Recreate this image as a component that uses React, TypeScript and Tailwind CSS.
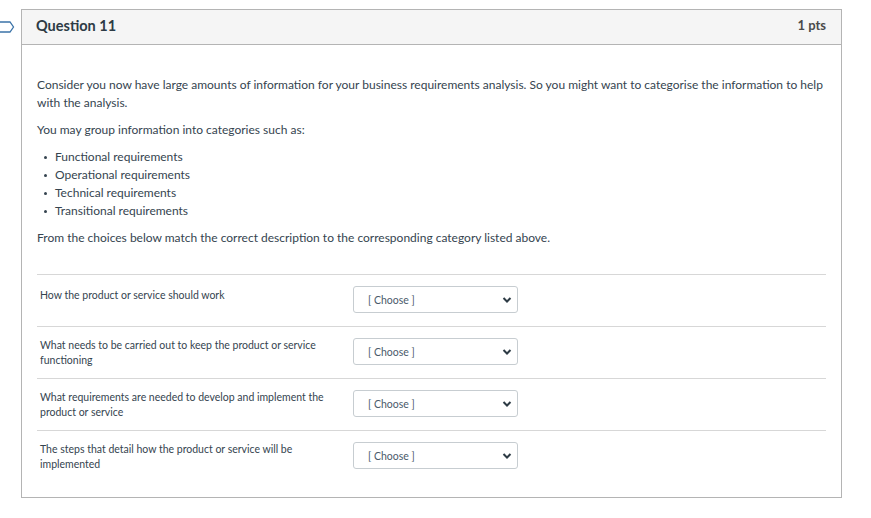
import React from 'react';

const rows = [
  { label: 'How the product or service should work', lift: true },
  { label: 'What needs to be carried out to keep the product or service functioning' },
  { label: 'What requirements are needed to develop and implement the product or service' },
  { label: 'The steps that detail how the product or service will be implemented' },
];

const bullets = [
  'Functional requirements',
  'Operational requirements',
  'Technical requirements',
  'Transitional requirements',
];

function ChooseSelect() {
  return (
    <div className="mb-[2px] flex h-[27px] w-[165px] items-center justify-between rounded-[3px] border border-[#c7cdd1] bg-white pl-[14px] pr-[5px]">
      <span className="text-[10.5px] text-[#4a5a6a]">[ Choose ]</span>
      <svg width="10" height="8" viewBox="0 0 10 8">
        <path d="M1.5 2 L5 5.5 L8.5 2" fill="none" stroke="#2d3b45" strokeWidth="2" />
      </svg>
    </div>
  );
}

export default function App() {
  return (
    <div
      className="relative min-h-[518px] bg-white pl-[21px] pt-[9px] text-[#35444f]"
      style={{ fontFamily: 'Lato, "Noto Sans", sans-serif' }}
    >
      {/* question flag */}
      <svg className="absolute left-0 top-[21px]" width="15" height="12" viewBox="0 0 15 12">
        <path d="M-2 1 H10 L13.5 6 L10 11 H-2" fill="none" stroke="#3b73a8" strokeWidth="1.3" />
      </svg>

      <div className="w-[821px] border border-[#b4b4b4]">
        <div className="flex h-[35px] items-center justify-between border-b border-[#b4b4b4] bg-[#f5f5f5] pb-[3px] pl-[14px] pr-[15px]">
          <span className="text-[14.5px] font-bold text-[#2d3b45]">Question 11</span>
          <span className="text-[13px] font-bold text-[#4a4a4a]">1 pts</span>
        </div>

        <div className="px-[15px] pb-[15px] pt-[31px] text-[12px] leading-[18px]">
          <p>
            Consider you now have large amounts of information for your business requirements analysis. So you might want to
            categorise the information to help with the analysis.
          </p>
          <p className="mt-[9px]">You may group information into categories such as:</p>
          <ul className="mt-[9px] pl-[7px]">
            {bullets.map((b) => (
              <li key={b} className="flex items-center">
                <span className="mr-[8px] inline-block h-[3px] w-[3px] rounded-full bg-[#35444f]" />
                {b}
              </li>
            ))}
          </ul>
          <p className="mt-[9px]">From the choices below match the correct description to the corresponding category listed above.</p>

          <div className="mt-[27px]">
            {rows.map((r, i) => (
              <div
                key={i}
                className="flex h-[52px] items-center border-t border-[#d7d7d7]"
              >
                <div className={`w-[316px] pl-[3px] pr-[14px] text-[10.5px] leading-[15px] ${r.lift ? 'mb-[10px]' : ''}`}>
                  {r.label}
                </div>
                <ChooseSelect />
              </div>
            ))}
          </div>
        </div>
      </div>
    </div>
  );
}
